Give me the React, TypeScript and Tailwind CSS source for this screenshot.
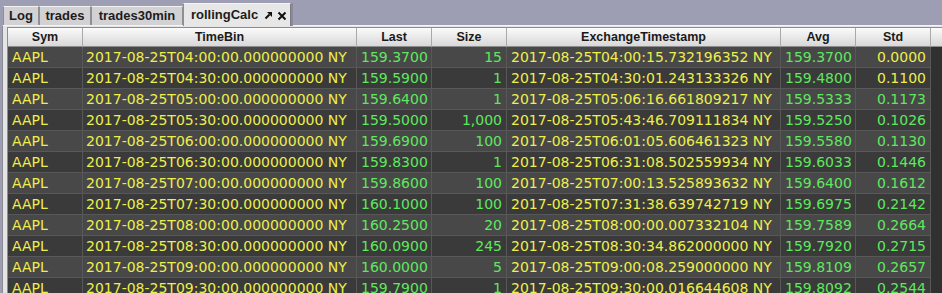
const YEL = "text-[#eeee4c]";
const GRN = "text-[#5ee85e]";

type Row = {
  bin: string;
  last: string;
  size: string;
  ts: string;
  avg: string;
  std: string;
  stdYellow?: boolean;
};

const rows: Row[] = [
  { bin: "04:00", last: "159.3700", size: "15", ts: "04:00:15.732196352", avg: "159.3700", std: "0.0000", stdYellow: true },
  { bin: "04:30", last: "159.5900", size: "1", ts: "04:30:01.243133326", avg: "159.4800", std: "0.1100", stdYellow: true },
  { bin: "05:00", last: "159.6400", size: "1", ts: "05:06:16.661809217", avg: "159.5333", std: "0.1173" },
  { bin: "05:30", last: "159.5000", size: "1,000", ts: "05:43:46.709111834", avg: "159.5250", std: "0.1026" },
  { bin: "06:00", last: "159.6900", size: "100", ts: "06:01:05.606461323", avg: "159.5580", std: "0.1130" },
  { bin: "06:30", last: "159.8300", size: "1", ts: "06:31:08.502559934", avg: "159.6033", std: "0.1446" },
  { bin: "07:00", last: "159.8600", size: "100", ts: "07:00:13.525893632", avg: "159.6400", std: "0.1612" },
  { bin: "07:30", last: "160.1000", size: "100", ts: "07:31:38.639742719", avg: "159.6975", std: "0.2142" },
  { bin: "08:00", last: "160.2500", size: "20", ts: "08:00:00.007332104", avg: "159.7589", std: "0.2664" },
  { bin: "08:30", last: "160.0900", size: "245", ts: "08:30:34.862000000", avg: "159.7920", std: "0.2715" },
  { bin: "09:00", last: "160.0000", size: "5", ts: "09:00:08.259000000", avg: "159.8109", std: "0.2657" },
  { bin: "09:30", last: "159.7900", size: "1", ts: "09:30:00.016644608", avg: "159.8092", std: "0.2544" },
];

const headers = ["Sym", "TimeBin", "Last", "Size", "ExchangeTimestamp", "Avg", "Std"];
const cols = "grid grid-cols-[75px_274px_75px_75px_274px_75px_75px_1fr]";

function Tab({ label, width }: { label: string; width: string }) {
  return (
    <div
      className={`${width} h-[19px] flex items-center justify-center border-t border-l border-r border-t-[#f2f2f2] border-l-[#8e8e96] border-r-[#8e8e96] bg-[#d2d2d4] text-[13px] font-bold text-[#1c1c1c]`}
    >
      {label}
    </div>
  );
}

function UndockIcon() {
  return (
    <svg width="9" height="9" viewBox="0 0 9 9">
      <path d="M3 1 H8 V6 Z" fill="#111" />
      <path d="M1.5 7.5 L5.5 3.5" stroke="#111" strokeWidth="2" />
    </svg>
  );
}

function CloseIcon() {
  return (
    <svg width="10" height="10" viewBox="0 0 10 10">
      <path d="M1.5 1.5 L8.5 8.5 M8.5 1.5 L1.5 8.5" stroke="#111" strokeWidth="2" />
    </svg>
  );
}

function Cell({ children, className }: { children?: React.ReactNode; className: string }) {
  return (
    <div className={`h-[21px] border-b border-r border-[#585858] px-[4px] leading-[20px] whitespace-nowrap overflow-hidden ${className}`}>
      {children}
    </div>
  );
}

export default function App() {
  return (
    <div className="w-[942px] h-[293px] overflow-hidden bg-[#9d9eb3] flex flex-col font-['Liberation_Sans',sans-serif]">
      <div className="h-[25px] flex items-end pl-[3px] shrink-0">
        <Tab label="Log" width="w-[36px]" />
        <Tab label="trades" width="w-[52px]" />
        <Tab label="trades30min" width="w-[92px]" />
        <div className="relative z-10 -mb-px w-[108px] h-[23px] flex items-center gap-[6px] pl-[7px] border-t border-l border-r border-t-[#f6f6f6] border-l-[#8e8e96] border-r-[#7c7c88] bg-[#e7e7e7] text-[13px] font-bold text-[#1c1c1c] shadow-[2px_0_0_#8a8a9c]">
          <span>rollingCalc</span>
          <span className="flex items-center gap-[4px] mt-px">
            <UndockIcon />
            <CloseIcon />
          </span>
        </div>
      </div>
      <div className="flex-1 min-h-0 ml-[2px] border-t border-l border-t-[#f4f4f4] border-l-[#8a8a92] bg-[#e5e5e5] pt-px pl-[4px]">
        <div className="h-full border-t border-l border-[#8c8c8c] bg-[#303030] overflow-hidden">
          <div className={`${cols} h-[19px] bg-gradient-to-b from-[#fbfbfb] to-[#d8d8d8] border-b border-[#8c8c8c]`}>
            {headers.map((h) => (
              <div
                key={h}
                className="border-r border-[#a9a9a9] flex items-center justify-center text-[12.5px] font-bold text-[#1a1a1a]"
              >
                {h}
              </div>
            ))}
            <div />
          </div>
          <div className="font-['DejaVu_Sans',sans-serif] text-[14px]">
            {rows.map((r, i) => {
              const bg = i % 2 === 0 ? "bg-[#484848]" : "bg-[#3a3a3a]";
              return (
                <div key={r.bin} className={cols}>
                  <Cell className={`${bg} ${YEL}`}>AAPL</Cell>
                  <Cell className={`${bg} ${YEL} pl-[3px]`}>{`2017-08-25T${r.bin}:00.000000000 NY`}</Cell>
                  <Cell className={`${bg} ${GRN}`}>{r.last}</Cell>
                  <Cell className={`${bg} ${GRN} text-right`}>{r.size}</Cell>
                  <Cell className={`${bg} ${YEL}`}>{`2017-08-25T${r.ts} NY`}</Cell>
                  <Cell className={`${bg} ${GRN}`}>{r.avg}</Cell>
                  <Cell className={`${bg} ${r.stdYellow ? YEL : GRN} text-right`}>{r.std}</Cell>
                  <div className="h-[21px] bg-[#303030]" />
                </div>
              );
            })}
          </div>
        </div>
      </div>
    </div>
  );
}
